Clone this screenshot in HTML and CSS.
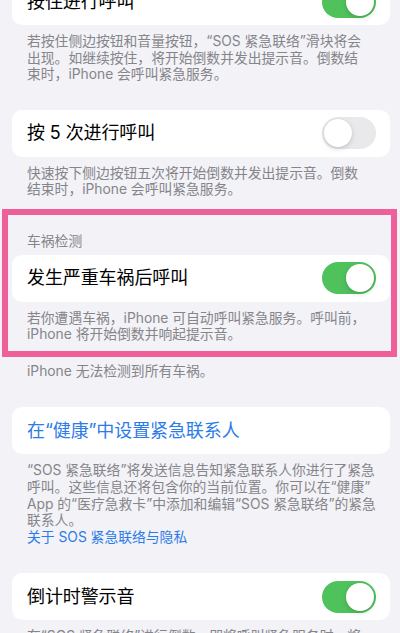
FILE: index.html
```html
<!DOCTYPE html>
<html lang="zh-CN">
<head>
<meta charset="utf-8">
<title>SOS 紧急联络</title>
<link rel="stylesheet" href="styles.css">
</head>
<body>
<main class="settings">
  <section class="group group-first">
    <div class="cell">
      <span class="cell-title">按住进行呼叫</span>
      <span class="switch is-on"></span>
    </div>
    <p class="footer">若按住侧边按钮和音量按钮，“SOS 紧急联络”滑块将会<br>出现。如继续按住，将开始倒数并发出提示音。倒数结<br>束时，iPhone 会呼叫紧急服务。</p>
  </section>

  <section class="group">
    <div class="cell">
      <span class="cell-title">按 5 次进行呼叫</span>
      <span class="switch"></span>
    </div>
    <p class="footer">快速按下侧边按钮五次将开始倒数并发出提示音。倒数<br>结束时，iPhone 会呼叫紧急服务。</p>
  </section>

  <section class="highlight">
    <h2 class="group-header">车祸检测</h2>
    <div class="cell cell-inset">
      <span class="cell-title">发生严重车祸后呼叫</span>
      <span class="switch is-on"></span>
    </div>
    <p class="footer footer-inset">若你遭遇车祸，iPhone 可自动呼叫紧急服务。呼叫前，<br>iPhone 将开始倒数并响起提示音。</p>
  </section>
  <p class="footer footer-after">iPhone 无法检测到所有车祸。</p>

  <section class="group group-wide">
    <div class="cell">
      <span class="cell-title cell-link">在“健康”中设置紧急联系人</span>
    </div>
    <p class="footer">“SOS 紧急联络”将发送信息告知紧急联系人你进行了紧急<br>呼叫。这些信息还将包含你的当前位置。你可以在“健康”<br>App 的“医疗急救卡”中添加和编辑“SOS 紧急联络”的紧急<br>联系人。<br><a class="footer-link" href="#">关于 SOS 紧急联络与隐私</a></p>
  </section>

  <section class="group group-wide">
    <div class="cell">
      <span class="cell-title">倒计时警示音</span>
      <span class="switch is-on"></span>
    </div>
    <p class="footer">在“SOS 紧急联络”进行倒数，即将呼叫紧急服务时，将<br>播放警示音。</p>
  </section>
</main>
</body>
</html>
```

FILE: styles.css
```css
* {
  box-sizing: border-box;
  margin: 0;
  padding: 0;
}

html,
body {
  background: #f2f2f7;
}

body {
  width: 400px;
  height: 633px;
  overflow: hidden;
  font-family: Inter, "Noto Sans CJK SC", sans-serif;
  color: #000;
}

.settings {
  display: flex;
  flex-direction: column;
}

/* list sections */
.group {
  margin-top: 27px;
}

.group-first {
  margin-top: -22px;
}

.group-wide {
  margin-top: 28px;
}

/* a white rounded row */
.cell {
  height: 47px;
  margin: 0 10px 0 12px;
  padding: 0 14px 0 15px;
  background: #fff;
  border-radius: 10px;
  display: flex;
  align-items: center;
  justify-content: space-between;
}

.cell-title {
  font-size: 18px;
  line-height: 22px;
  letter-spacing: -0.1px;
}

.cell-link {
  color: #2b7be9;
}

/* explanatory text under a row */
.footer {
  padding: 8px 6px 0 27px;
  font-size: 13.8px;
  line-height: 16.6px;
  color: #85858a;
  white-space: nowrap;
}

.footer-link {
  color: #2b7be9;
  text-decoration: none;
}

.footer-after {
  padding-top: 6px;
}

/* uppercase-style section title */
.group-header {
  padding-left: 19px;
  font-size: 13.8px;
  line-height: 16.6px;
  font-weight: 400;
  color: #85858a;
  margin-bottom: 5px;
}

/* pink frame around the crash detection section */
.highlight {
  margin: 11px 3px 0 2px;
  border: 6px solid #ef5f99;
  padding: 18px 0 8px;
}

.cell-inset {
  margin: 0 1px 0 4px;
}

.footer-inset {
  padding-left: 19px;
}

/* toggle switch */
.switch {
  flex: none;
  width: 54px;
  height: 32px;
  padding: 2px;
  border-radius: 16px;
  background: #e9e9eb;
  display: flex;
  justify-content: flex-start;
}

.switch::after {
  content: "";
  width: 28px;
  height: 28px;
  border-radius: 50%;
  background: #fff;
  box-shadow: 0 2px 5px rgba(0, 0, 0, 0.15), 0 0 1px rgba(0, 0, 0, 0.1);
}

.switch.is-on {
  background: #4fc25c;
  justify-content: flex-end;
}
```
